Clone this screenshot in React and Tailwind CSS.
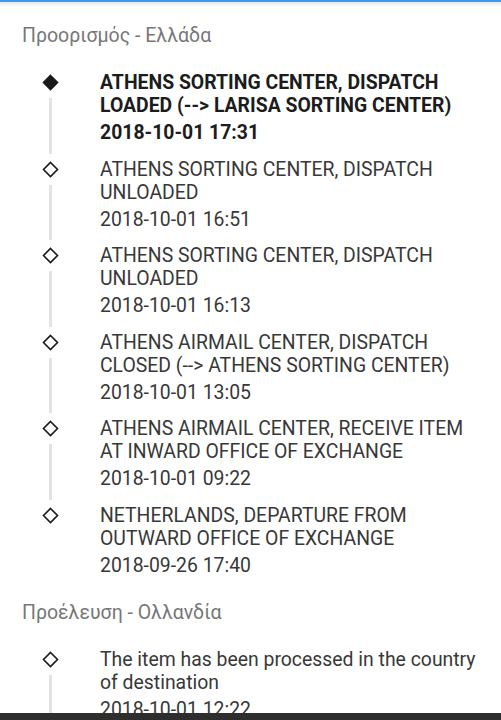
const sections = [
  {
    title: "Προορισμός - Ελλάδα",
    events: [
      { text: "ATHENS SORTING CENTER, DISPATCH LOADED (--> LARISA SORTING CENTER)", date: "2018-10-01 17:31", current: true },
      { text: "ATHENS SORTING CENTER, DISPATCH UNLOADED", date: "2018-10-01 16:51" },
      { text: "ATHENS SORTING CENTER, DISPATCH UNLOADED", date: "2018-10-01 16:13" },
      { text: "ATHENS AIRMAIL CENTER, DISPATCH CLOSED (--> ATHENS SORTING CENTER)", date: "2018-10-01 13:05" },
      { text: "ATHENS AIRMAIL CENTER, RECEIVE ITEM AT INWARD OFFICE OF EXCHANGE", date: "2018-10-01 09:22" },
      { text: "NETHERLANDS, DEPARTURE FROM OUTWARD OFFICE OF EXCHANGE", date: "2018-09-26 17:40" },
    ],
  },
  {
    title: "Προέλευση - Ολλανδία",
    events: [
      { text: "The item has been processed in the country of destination", date: "2018-10-01 12:22" },
      { text: "The item is at its final destination", date: "2018-10-01 09:30" },
    ],
  },
]

function Diamond({ filled }) {
  return (
    <svg width="17" height="17" viewBox="0 0 17 17" className="shrink-0 mt-[3px]">
      <path
        d="M8.5 1.5 L15.5 8.5 L8.5 15.5 L1.5 8.5 Z"
        fill={filled ? "#1a1a1a" : "#fff"}
        stroke="#1a1a1a"
        strokeWidth="1.6"
      />
    </svg>
  )
}

function Event({ data, last }) {
  return (
    <div className="flex">
      <div className="w-[100px] shrink-0 flex flex-col items-center pl-[1px]">
        <Diamond filled={data.current} />
        {!last && <div className="flex-1 w-[3px] bg-[#e3e3e3] mt-[7px] mb-[4px]" />}
      </div>
      <div className={`flex-1 pr-[18px] pb-[13.6px] text-[19.4px] ${data.current ? "font-bold text-[#1c1c1c]" : "text-[#383838]"}`}>
        <p className="leading-[23px]">{data.text}</p>
        <p className="leading-[23px] mt-[4px]">{data.date}</p>
      </div>
    </div>
  )
}

export default function App() {
  return (
    <div className="relative h-[720px] w-[501px] overflow-hidden bg-white" style={{ fontFamily: "Roboto, 'Noto Sans', sans-serif" }}>
      <div className="h-[2px] bg-[#3d9be9]" />
      <div className="h-[5px] bg-gradient-to-b from-[#e6e6e6] to-white" />
      {sections.map((sec, i) => (
        <div key={i} className={i === 0 ? "pt-[17px]" : "pt-[10px]"}>
          <h2 className="px-[22px] text-[19.5px] leading-[24px] text-[#777777] mb-[23px]">{sec.title}</h2>
          {sec.events.map((ev, j) => (
            <Event key={j} data={ev} last={j === sec.events.length - 1} />
          ))}
        </div>
      ))}
      <div className="absolute bottom-0 left-0 right-0 h-[7px] bg-[#2e2e2e]" />
    </div>
  )
}
